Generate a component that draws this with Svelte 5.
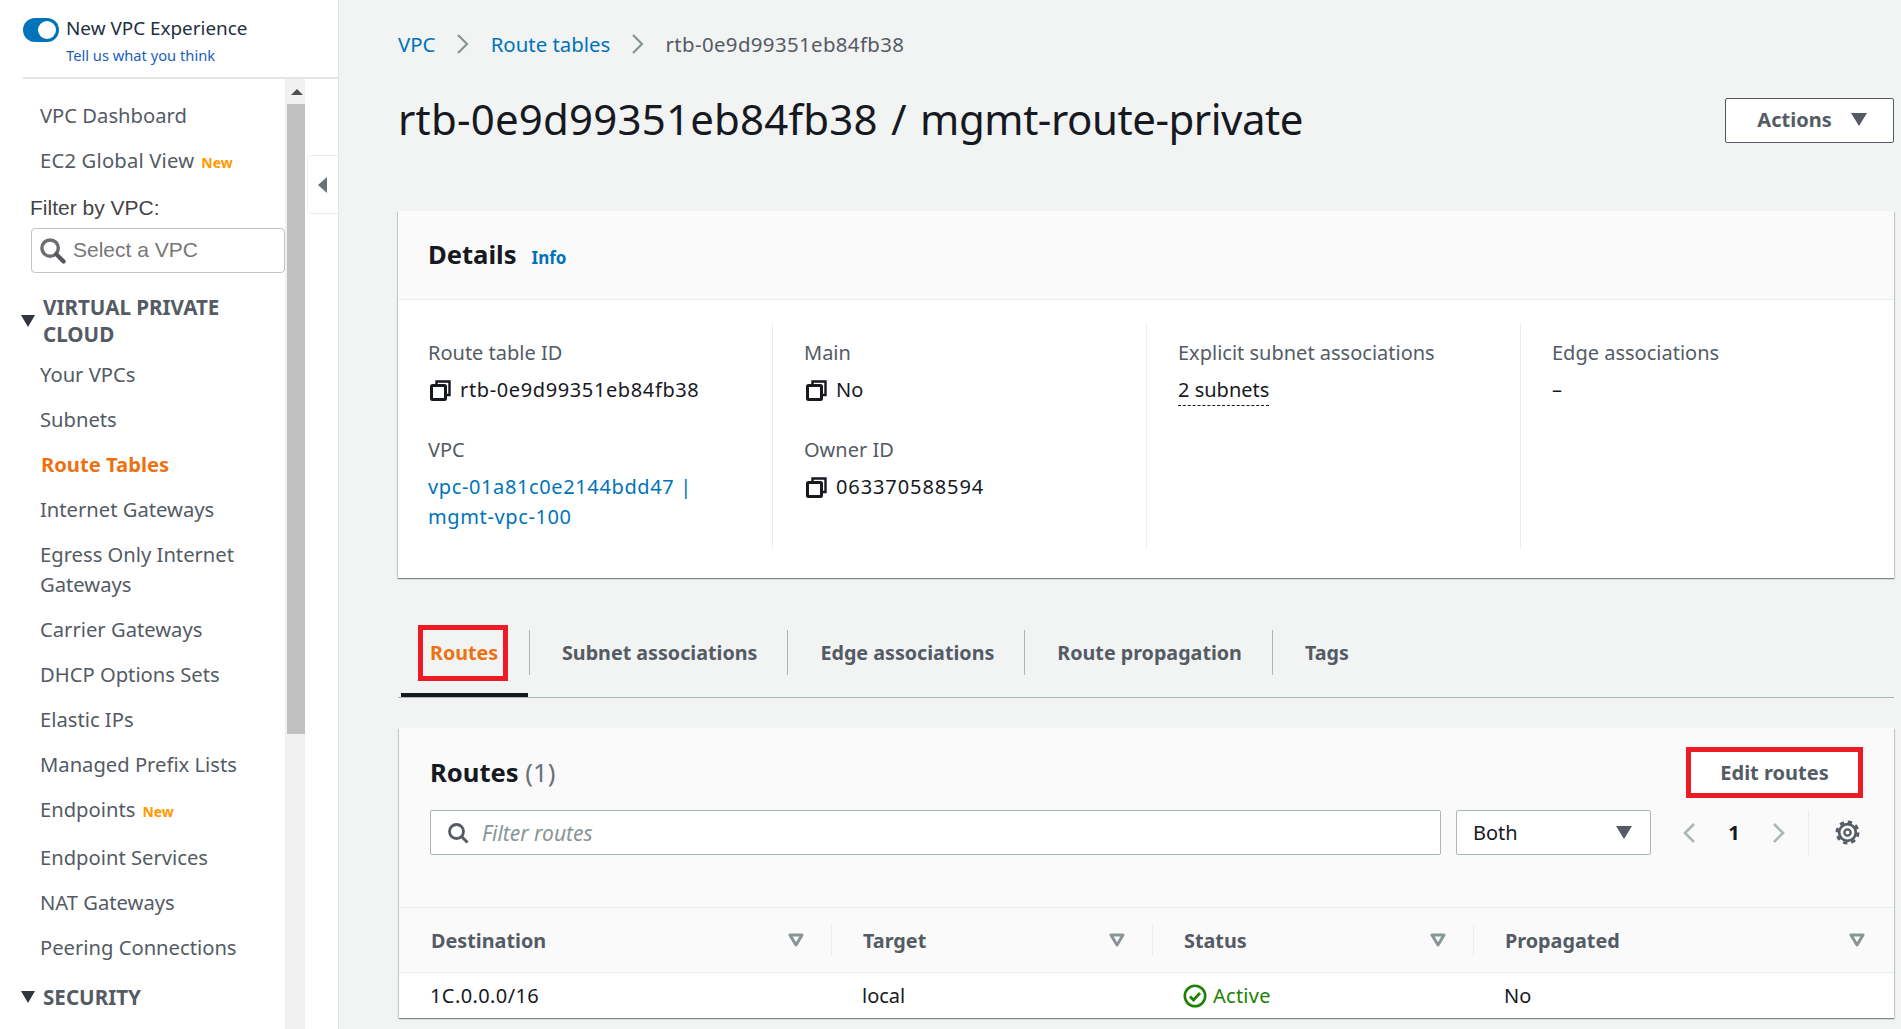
<script lang="ts">
  const topLinks = [
    { label: "VPC Dashboard" },
    { label: "EC2 Global View", isNew: true }
  ];

  const vpcLinks = [
    { label: "Your VPCs" },
    { label: "Subnets" },
    { label: "Route Tables", active: true },
    { label: "Internet Gateways" },
    { label: "Egress Only Internet Gateways" },
    { label: "Carrier Gateways" },
    { label: "DHCP Options Sets" },
    { label: "Elastic IPs" },
    { label: "Managed Prefix Lists" },
    { label: "Endpoints", isNew: true },
    { label: "Endpoint Services" },
    { label: "NAT Gateways" },
    { label: "Peering Connections" }
  ];

  const tabs = ["Subnet associations", "Edge associations", "Route propagation", "Tags"];

  const columns = [
    { label: "Destination", width: 401 },
    { label: "Target", width: 290 },
    { label: "Status", width: 290 },
    { label: "Propagated", width: 0 }
  ];
</script>

{#snippet copyIcon()}
  <svg class="copy" viewBox="0 0 21 21" width="21" height="21" aria-hidden="true">
    <path d="M6.5 5V1.5h13V15H16" fill="none" stroke="#16191f" stroke-width="2.4" />
    <rect x="1.5" y="5.5" width="14" height="14" rx="1" fill="none" stroke="#16191f" stroke-width="3" />
  </svg>
{/snippet}

{#snippet filterIcon()}
  <svg class="filter-caret" viewBox="0 0 16 14" width="16" height="14" aria-hidden="true">
    <path d="M2 2h12L8 12z" fill="none" stroke="#879596" stroke-width="3" stroke-linejoin="round" />
  </svg>
{/snippet}

<div class="page">
  <aside class="sidebar">
    <header class="experience">
      <span class="toggle"><span class="knob"></span></span>
      <div>
        <p class="exp-title">New VPC Experience</p>
        <a class="exp-link" href="#feedback">Tell us what you think</a>
      </div>
    </header>

    <div class="nav-area">
      <nav class="nav">
        <ul class="links top">
          {#each topLinks as link}
            <li>{link.label}{#if link.isNew}<span class="new">New</span>{/if}</li>
          {/each}
        </ul>

        <label class="filter-label" for="vpc-filter">Filter by VPC:</label>
        <div class="vpc-select">
          <svg viewBox="0 0 28 28" width="27" height="27" aria-hidden="true">
            <circle cx="11.5" cy="11.5" r="8.5" fill="#fff" stroke="#6b6f73" stroke-width="3.6" />
            <path d="M18 18l7.5 7.5" stroke="#55595d" stroke-width="4.4" stroke-linecap="round" />
          </svg>
          <span id="vpc-filter">Select a VPC</span>
        </div>

        <h3 class="section first">
          <span class="tri"></span>
          <span>VIRTUAL PRIVATE<br />CLOUD</span>
        </h3>
        <ul class="links">
          {#each vpcLinks as link}
            <li class:active={link.active}>{link.label}{#if link.isNew}<span class="new">New</span>{/if}</li>
          {/each}
        </ul>
        <h3 class="section">
          <span class="tri"></span>
          <span>SECURITY</span>
        </h3>
      </nav>

      <div class="scrollbar">
        <svg class="arrow-up" viewBox="0 0 12 8" width="12" height="8" aria-hidden="true"><path d="M0 7L6 1l6 6z" fill="#505050" /></svg>
        <div class="thumb"></div>
      </div>

      <div class="gutter">
        <button class="collapse" aria-label="Collapse">
          <svg viewBox="0 0 10 16" width="10" height="16" aria-hidden="true"><path d="M9 0v16L0 8z" fill="#687078" /></svg>
        </button>
      </div>
    </div>
  </aside>

  <main class="main">
    <nav class="crumbs">
      <a href="#vpc">VPC</a>
      <svg viewBox="0 0 14 22" width="14" height="22" aria-hidden="true"><path d="M2 2l9 9-9 9" fill="none" stroke="#879596" stroke-width="2.2" /></svg>
      <a href="#tables">Route tables</a>
      <svg viewBox="0 0 14 22" width="14" height="22" aria-hidden="true"><path d="M2 2l9 9-9 9" fill="none" stroke="#879596" stroke-width="2.2" /></svg>
      <span class="crumb-id">rtb-0e9d99351eb84fb38</span>
    </nav>

    <div class="title-row">
      <h1><span class="title-id">rtb-0e9d99351eb84fb38</span> / <span class="title-name">mgmt-route-private</span></h1>
      <button class="actions">Actions <span class="caret"></span></button>
    </div>

    <section class="card details">
      <header class="details-head">
        <h2>Details</h2>
        <a href="#info">Info</a>
      </header>
      <div class="details-grid">
        <div class="col">
          <p class="key">Route table ID</p>
          <p class="val">{@render copyIcon()}<span class="num">rtb-0e9d99351eb84fb38</span></p>
          <p class="key lower">VPC</p>
          <p class="val link num"><a href="#vpc">vpc-01a81c0e2144bdd47 | mgmt-vpc-100</a></p>
        </div>
        <div class="col">
          <p class="key">Main</p>
          <p class="val">{@render copyIcon()}No</p>
          <p class="key lower">Owner ID</p>
          <p class="val">{@render copyIcon()}<span class="owner">063370588594</span></p>
        </div>
        <div class="col">
          <p class="key">Explicit subnet associations</p>
          <p class="val"><span class="dotted">2 subnets</span></p>
        </div>
        <div class="col">
          <p class="key">Edge associations</p>
          <p class="val">–</p>
        </div>
      </div>
    </section>

    <div class="tabs">
      <div class="tab current"><span class="mark">Routes</span></div>
      {#each tabs as tab}
        <div class="tab"><span class="tab-label">{tab}</span></div>
      {/each}
    </div>

    <section class="card routes">
      <div class="routes-head">
        <h2>Routes <span class="count">(1)</span></h2>
        <button class="edit">Edit routes</button>
      </div>
      <div class="tools">
        <div class="search">
          <svg viewBox="0 0 22 22" width="22" height="22" aria-hidden="true">
            <circle cx="9.5" cy="9.5" r="7" fill="none" stroke="#545b64" stroke-width="2.8" />
            <path d="M14.5 14.5l6 6" stroke="#545b64" stroke-width="3" />
          </svg>
          <span>Filter routes</span>
        </div>
        <div class="both">Both <span class="caret"></span></div>
        <div class="pager">
          <svg viewBox="0 0 14 22" width="14" height="22" aria-hidden="true"><path d="M12 2L3 11l9 9" fill="none" stroke="#aab7b8" stroke-width="2.6" /></svg>
          <strong>1</strong>
          <svg viewBox="0 0 14 22" width="14" height="22" aria-hidden="true"><path d="M2 2l9 9-9 9" fill="none" stroke="#aab7b8" stroke-width="2.6" /></svg>
        </div>
        <div class="prefs">
          <svg viewBox="0 0 24 24" width="25" height="25" aria-hidden="true">
            <circle cx="12" cy="12" r="8" fill="none" stroke="#545b64" stroke-width="2.6" />
            <circle cx="12" cy="12" r="10.2" fill="none" stroke="#545b64" stroke-width="2.6" stroke-dasharray="4.2 3.81" />
            <circle cx="12" cy="12" r="3" fill="none" stroke="#545b64" stroke-width="2.2" />
          </svg>
        </div>
      </div>

      <div class="thead">
        {#each columns as col, i}
          <div class="th" class:last={i === columns.length - 1} style={col.width ? `width: ${col.width}px` : ""}>
            <span>{col.label}</span>
            {@render filterIcon()}
          </div>
        {/each}
      </div>
      <div class="tr">
        <div class="td dest" style="width: 401px">1C.0.0.0/16</div>
        <div class="td" style="width: 290px">local</div>
        <div class="td active-status" style="width: 290px">
          <svg viewBox="0 0 24 24" width="24" height="24" aria-hidden="true">
            <circle cx="12" cy="12" r="10.2" fill="none" stroke="#1d8102" stroke-width="2.6" />
            <path d="M7 12.5l3.5 3.5L17 9" fill="none" stroke="#1d8102" stroke-width="2.8" />
          </svg>
          <span class="active-label">Active</span>
        </div>
        <div class="td">No</div>
      </div>
    </section>
  </main>
</div>

<style>
  :global(body) {
    margin: 0;
    background: #f2f3f3;
    overflow: hidden;
  }

  .page {
    display: flex;
    height: 1029px;
    overflow: hidden;
    font-family: "Noto Sans", "Open Sans", sans-serif;
    font-size: 20px;
    color: #16191f;
  }

  p,
  h1,
  h2,
  h3,
  ul {
    margin: 0;
    padding: 0;
  }

  a {
    color: #0073bb;
    text-decoration: none;
  }

  .num {
    letter-spacing: 0.62px;
  }

  .owner {
    letter-spacing: 0.9px;
  }

  /* sidebar */
  .sidebar {
    flex: 0 0 338px;
    display: flex;
    flex-direction: column;
    background: #fff;
  }

  .experience {
    display: flex;
    gap: 7px;
    height: 79px;
    margin-left: 23px;
    box-sizing: border-box;
    padding-top: 14px;
    border-bottom: 2px solid #e4e6e6;
    border-right: 1px solid #e4e6e6;
  }

  .toggle {
    flex: none;
    width: 36px;
    height: 24px;
    margin-top: 4px;
    border-radius: 12px;
    background: #0073bb;
    position: relative;
  }

  .knob {
    position: absolute;
    right: 3px;
    top: 3px;
    width: 18px;
    height: 18px;
    border-radius: 50%;
    background: #fff;
  }

  .exp-title {
    font-size: 18.9px;
    line-height: 28px;
    color: #232f3e;
  }

  .exp-link {
    display: block;
    font-size: 14.7px;
    line-height: 27px;
    color: #1a5fc0;
  }

  .nav-area {
    flex: 1;
    display: flex;
    min-height: 0;
  }

  .nav {
    flex: 0 0 285px;
    overflow: hidden;
    padding-top: 13px;
  }

  .links {
    list-style: none;
    padding-left: 40px;
    color: #545b64;
  }

  .links li {
    padding: 7.5px 0;
    line-height: 30px;
    font-size: 20.2px;
  }

  .links.top li + li {
    letter-spacing: 0.2px;
  }

  .links li.active {
    color: #ec7211;
    font-weight: 700;
    padding-left: 1px;
  }

  .new {
    margin-left: 7px;
    font-size: 14px;
    font-weight: 700;
    letter-spacing: 0;
    color: #ff9900;
  }

  .filter-label {
    display: block;
    margin: 10.6px 0 8px 30px;
    font-family: "Liberation Sans", sans-serif;
    font-size: 21px;
    line-height: 24px;
    color: #444;
  }

  .vpc-select {
    display: flex;
    align-items: center;
    gap: 7px;
    width: 254px;
    height: 45px;
    margin-left: 31px;
    padding-left: 7px;
    box-sizing: border-box;
    border: 1px solid #c4c4c4;
    border-radius: 4px;
    font-family: "Liberation Sans", sans-serif;
    font-size: 21px;
    color: #777;
  }

  .section {
    display: flex;
    align-items: center;
    gap: 8px;
    margin: 14px 0 0 21px;
    font-size: 20.6px;
    line-height: 27px;
    font-weight: 700;
    color: #545b64;
  }

  .section.first {
    margin-top: 21px;
    margin-bottom: 4px;
  }

  .tri {
    flex: none;
    width: 0;
    height: 0;
    border-left: 7px solid transparent;
    border-right: 7px solid transparent;
    border-top: 12px solid #30363c;
  }

  .scrollbar {
    flex: 0 0 20px;
    background: #f1f1f1;
    box-sizing: border-box;
    padding-top: 25px;
    position: relative;
  }

  .arrow-up {
    position: absolute;
    left: 6px;
    top: 9px;
  }

  .thumb {
    height: 630px;
    margin-left: 2px;
    background: #c1c1c1;
  }

  .gutter {
    flex: 1;
    border-right: 1px solid #e4e6e6;
    padding-top: 76px;
  }

  .collapse {
    display: flex;
    align-items: center;
    justify-content: center;
    width: 31px;
    height: 59px;
    margin-left: 2px;
    padding: 0;
    background: #fff;
    border: 1px solid #e9ebeb;
    border-right: 0;
    border-radius: 5px 0 0 5px;
  }

  /* main column */
  .main {
    flex: 1;
    min-width: 0;
    padding: 0 7px 0 59px;
  }

  .crumbs {
    display: flex;
    align-items: center;
    gap: 20.6px;
    height: 88px;
    font-size: 20.4px;
    color: #545b64;
  }

  .crumb-id {
    letter-spacing: 0.38px;
  }

  .title-row {
    display: flex;
    justify-content: space-between;
    align-items: flex-start;
    height: 123px;
  }

  h1 {
    margin-top: 4px;
    font-size: 42px;
    line-height: 54px;
    font-weight: 400;
    word-spacing: 2.5px;
    color: #16191f;
  }

  .title-id {
    letter-spacing: 0.2px;
  }

  .title-name {
    letter-spacing: -0.45px;
  }

  .actions {
    display: flex;
    align-items: center;
    justify-content: center;
    gap: 19px;
    width: 169px;
    height: 45px;
    margin-top: 10px;
    padding: 0 0 2px 5px;
    background: #fff;
    border: 1px solid #545b64;
    border-radius: 2px;
    font: 700 20px "Noto Sans", sans-serif;
    color: #545b64;
  }

  .caret {
    display: inline-block;
    width: 0;
    height: 0;
    border-left: 8px solid transparent;
    border-right: 8px solid transparent;
    border-top: 13px solid #545b64;
  }

  .card {
    background: #fff;
    box-shadow: 0 1px 1px 0 rgba(0, 28, 36, 0.3), 1px 1px 1px 0 rgba(0, 28, 36, 0.15), -1px 1px 1px 0 rgba(0, 28, 36, 0.15);
  }

  .details {
    height: 367px;
  }

  .details-head {
    display: flex;
    align-items: baseline;
    gap: 15px;
    height: 89px;
    box-sizing: border-box;
    padding: 26px 30px 0;
    background: #fafafa;
    border-bottom: 1px solid #eaeded;
  }

  h2 {
    font-size: 25.6px;
    line-height: 36px;
    font-weight: 700;
  }

  .details-head a {
    font-size: 17px;
    font-weight: 700;
  }

  .details-grid {
    display: grid;
    grid-template-columns: 375px 374px 374px 1fr;
    padding-top: 23px;
  }

  .col {
    height: 226px;
    box-sizing: border-box;
    padding: 15px 0 0 31px;
    border-right: 1px solid #eaeded;
  }

  .col:first-child {
    padding-left: 30px;
  }

  .col:last-child {
    border-right: 0;
  }

  .key {
    line-height: 30px;
    color: #545b64;
  }

  .key.lower {
    margin-top: 30px;
  }

  .val {
    display: flex;
    align-items: center;
    gap: 9px;
    margin-top: 7px;
    line-height: 30px;
    color: #16191f;
  }

  .val.link {
    display: block;
    width: 300px;
  }

  .copy {
    flex: none;
    margin-left: 2px;
  }

  .dotted {
    border-bottom: 1px dashed #16191f;
    line-height: 30px;
  }

  /* tabs */
  .tabs {
    display: flex;
    height: 120px;
    box-sizing: border-box;
    padding-top: 22px;
    border-bottom: 1px solid #aab7b8;
    align-items: flex-start;
  }

  .tab {
    display: flex;
    align-items: center;
    height: 97px;
    box-sizing: border-box;
    padding: 12px 0 4px;
    font-size: 19.7px;
    font-weight: 700;
    color: #545b64;
  }

  .tab-label {
    display: flex;
    align-items: center;
    height: 45px;
    padding: 0 30px 0 32px;
    border-right: 1px solid #aab7b8;
  }

  .tab:first-child + .tab .tab-label {
    padding-left: 30px;
  }

  .tab:last-child .tab-label {
    border-right: 0;
  }

  .tab.current {
    position: relative;
    width: 127px;
    margin: 0 4px 0 3px;
    padding: 16px 0 4px 17px;
    border-bottom: 4px solid #16191f;
    color: #ec7211;
  }

  .tab.current::after {
    content: "";
    position: absolute;
    right: -2px;
    top: 30px;
    height: 45px;
    border-right: 1px solid #aab7b8;
  }

  .mark {
    display: flex;
    align-items: center;
    height: 56px;
    padding: 0 5px 0 7px;
    border: 5px solid #ed1c24;
    box-sizing: border-box;
  }

  /* routes card */
  .routes {
    height: 290px;
    margin: 30px 0 0 1px;
    background: #fafafa;
  }

  .routes-head {
    display: flex;
    justify-content: space-between;
    align-items: center;
    height: 82px;
    box-sizing: border-box;
    padding: 7px 31px 0 31px;
  }

  .count {
    font-weight: 400;
    color: #687078;
  }

  .edit {
    width: 177px;
    height: 51px;
    background: #fff;
    border: 5px solid #ed1c24;
    font: 700 20px "Noto Sans", sans-serif;
    color: #545b64;
  }

  .tools {
    display: flex;
    align-items: center;
    height: 45px;
    padding-left: 31px;
  }

  .search {
    display: flex;
    align-items: center;
    gap: 13px;
    width: 1011px;
    height: 45px;
    box-sizing: border-box;
    padding-left: 16px;
    background: #fff;
    border: 1px solid #aab7b8;
    border-radius: 2px;
    font-size: 21px;
    font-style: italic;
    color: #879596;
  }

  .both {
    display: flex;
    align-items: center;
    justify-content: space-between;
    width: 195px;
    height: 45px;
    box-sizing: border-box;
    margin-left: 15px;
    padding: 0 18px 0 16px;
    background: #fff;
    border: 1px solid #aab7b8;
    border-radius: 2px;
  }

  .pager {
    display: flex;
    align-items: center;
    justify-content: space-between;
    width: 104px;
    margin-left: 31px;
  }

  .pager strong {
    font-size: 20px;
  }

  .prefs {
    display: flex;
    align-items: center;
    height: 45px;
    margin-left: 22px;
    padding-left: 26px;
    border-left: 1px solid #eaeded;
  }

  .thead {
    display: flex;
    height: 66px;
    margin-top: 52px;
    box-sizing: border-box;
    align-items: center;
    border-top: 1px solid #eaeded;
    border-bottom: 1px solid #eaeded;
    padding-left: 32px;
  }

  .th {
    display: flex;
    align-items: center;
    justify-content: space-between;
    height: 31px;
    box-sizing: border-box;
    padding-right: 27px;
    border-right: 1px solid #eaeded;
    margin-right: 31px;
    font-size: 19.8px;
    font-weight: 700;
    color: #545b64;
  }

  .th.last {
    flex: 1;
    border-right: 0;
    margin-right: 0;
    padding-right: 29px;
  }

  .tr {
    display: flex;
    align-items: center;
    height: 45px;
    padding-left: 31px;
    background: #fff;
    color: #16191f;
  }

  .td {
    margin-right: 31px;
  }

  .dest {
    letter-spacing: 0.4px;
  }

  .active-status {
    display: flex;
    align-items: center;
    gap: 6px;
    color: #1d8102;
  }

  .active-label {
    letter-spacing: 0.25px;
  }
</style>
